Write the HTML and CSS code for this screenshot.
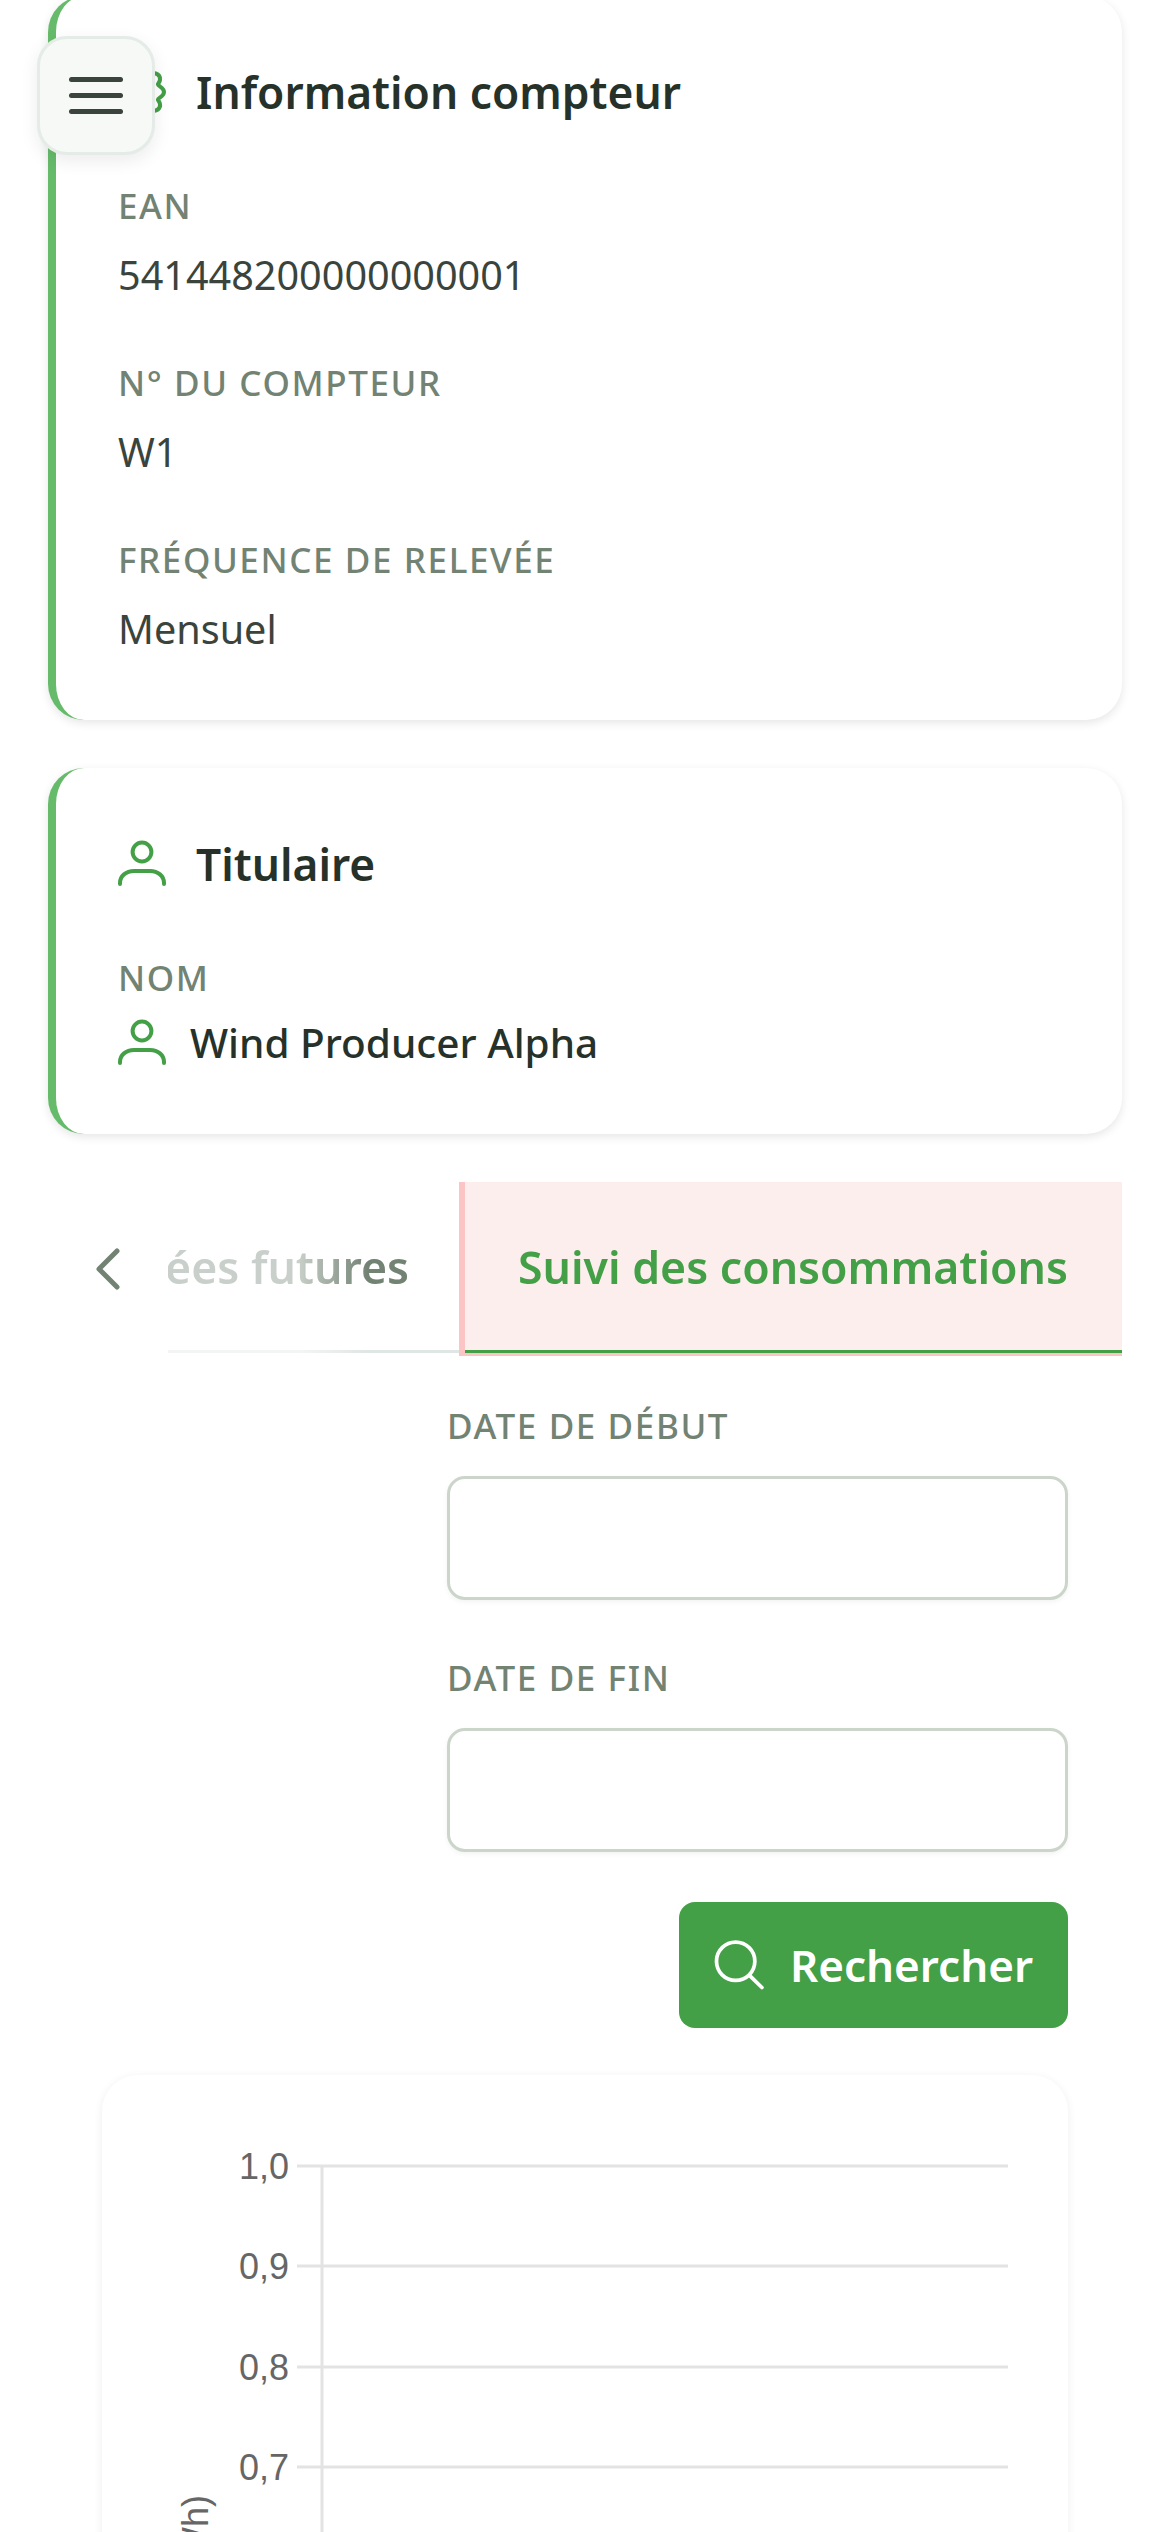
FILE: index.html
```html
<!DOCTYPE html>
<html lang="fr">
<head>
    <meta charset="UTF-8">
    <meta name="viewport" content="width=device-width, initial-scale=1.0">
    <title>Suivi des consommations</title>
    <link rel="stylesheet" href="styles.css">
</head>
<body>

    <button class="menu-button" aria-label="Menu">
        <span></span><span></span><span></span>
    </button>

    <main class="page">

        <section class="card">
            <h2 class="card-title">
                <svg class="icon" viewBox="0 0 24 24"><circle cx="12" cy="12" r="3.2"/><path d="M18 2.5C21 3 22 5.5 20 8C19.5 9 23 9.5 23 12C23 14.5 19.5 15 20 16C22 18.5 21 21 18 21.5"/></svg>
                Information compteur
            </h2>
            <div class="field">
                <div class="field-label">EAN</div>
                <div class="field-value">541448200000000001</div>
            </div>
            <div class="field">
                <div class="field-label">N° du compteur</div>
                <div class="field-value">W1</div>
            </div>
            <div class="field">
                <div class="field-label">Fréquence de relevée</div>
                <div class="field-value">Mensuel</div>
            </div>
        </section>

        <section class="card">
            <h2 class="card-title">
                <svg class="icon" viewBox="0 0 24 24"><circle cx="12" cy="6" r="4.7"/><path d="M1 22v-.5C1 18 4 15.5 8 15.5h8c4 0 7 2.5 7 6v.5"/></svg>
                Titulaire
            </h2>
            <div class="field">
                <div class="field-label">Nom</div>
                <div class="field-value holder">
                    <svg class="icon" viewBox="0 0 24 24"><circle cx="12" cy="6" r="4.7"/><path d="M1 22v-.5C1 18 4 15.5 8 15.5h8c4 0 7 2.5 7 6v.5"/></svg>
                    Wind Producer Alpha
                </div>
            </div>
        </section>

        <div class="tabs">
            <button class="tabs-back" aria-label="Précédent">
                <svg viewBox="0 0 26 42"><path d="M22 3L4 21l18 18"/></svg>
            </button>
            <div class="tabs-scroll">
                <div class="tab">Données futures</div>
                <div class="tab tab-active">Suivi des consommations</div>
            </div>
        </div>

        <form class="search-form">
            <label class="form-label">Date de début</label>
            <input class="form-input" type="text">
            <label class="form-label">Date de fin</label>
            <input class="form-input" type="text">
            <button class="search-button" type="button">
                <svg viewBox="0 0 24 24"><circle cx="10.4" cy="10.2" r="9.2"/><path d="M17.4 17.3L23 22.8"/></svg>
                Rechercher
            </button>
        </form>

        <section class="chart-card">
            <svg class="chart" viewBox="0 0 966 520" width="966" height="520">
                <g class="grid">
                    <path d="M195 91H906"/>
                    <path d="M195 191H906"/>
                    <path d="M195 292H906"/>
                    <path d="M195 392H906"/>
                    <path d="M220 91V520"/>
                </g>
                <g class="ticks">
                    <text x="187" y="104">1,0</text>
                    <text x="187" y="204">0,9</text>
                    <text x="187" y="305">0,8</text>
                    <text x="187" y="405">0,7</text>
                </g>
                <text class="axis-title" transform="translate(106 420) rotate(-90)">Consommation (kWh)</text>
            </svg>
        </section>

    </main>

</body>
</html>
```

FILE: styles.css
```css
html, body {
    margin: 0;
    height: 2532px;
    overflow: hidden;
    background-color: white;
}

body {
    font-family: "Noto Sans", "Open Sans", sans-serif;
    color: #263229;
    position: relative;
}

.page {
    display: flex;
    flex-direction: column;
    margin-top: -4px;
    padding: 0 48px;
}

/* floating menu */
.menu-button {
    position: absolute;
    left: 37px;
    top: 36px;
    z-index: 5;
    width: 118px;
    height: 119px;
    box-sizing: border-box;
    display: flex;
    flex-direction: column;
    align-items: center;
    justify-content: center;
    gap: 11px;
    padding: 0;
    background-color: #f7f9f7;
    border: 3px solid #e5ebe7;
    border-radius: 30px;
    box-shadow: 0 6px 18px rgba(0, 0, 0, 0.08);
}

.menu-button span {
    display: block;
    width: 54px;
    height: 5px;
    border-radius: 3px;
    background-color: #3a443c;
}

/* info cards */
.card {
    background-color: white;
    border-left: 8px solid #66bb6a;
    border-radius: 36px;
    box-shadow: 0 3px 10px rgba(0, 0, 0, 0.1);
    padding: 64px 54px 63px 62px;
    margin-bottom: 48px;
}

.card-title {
    display: flex;
    align-items: center;
    gap: 30px;
    margin: 0 0 57px;
    font-size: 44.3px;
    line-height: 64px;
    font-weight: 600;
}

.icon {
    width: 48px;
    height: 48px;
    flex: none;
    fill: none;
    stroke: #43a047;
    stroke-width: 2;
    stroke-linecap: round;
    stroke-linejoin: round;
}

.field {
    margin-bottom: 55px;
}

.field:last-child {
    margin-bottom: 0;
}

.field-label {
    font-size: 35px;
    line-height: 50px;
    font-weight: 500;
    letter-spacing: 1.6px;
    text-transform: uppercase;
    color: #728273;
    margin-bottom: 16px;
}

.field-value {
    font-size: 39.6px;
    line-height: 56px;
    color: #3a443c;
}

.holder {
    display: flex;
    align-items: center;
    gap: 24px;
    margin-top: -4px;
    font-size: 40.5px;
    font-weight: 500;
    color: #263229;
}

/* tabs */
.tabs {
    display: flex;
    align-items: stretch;
    height: 174px;
}

.tabs-back {
    flex: none;
    width: 120px;
    padding: 0 0 0 47px;
    background: none;
    border: none;
    display: flex;
    align-items: center;
}

.tabs-back svg {
    width: 26px;
    height: 42px;
    fill: none;
    stroke: #728273;
    stroke-width: 5;
    stroke-linecap: round;
    stroke-linejoin: round;
}

.tabs-scroll {
    flex: 1;
    min-width: 0;
    display: flex;
    justify-content: flex-end;
    overflow: hidden;
    background: linear-gradient(#e0e6e3, #e0e6e3) 0 168px / 100% 3px no-repeat;
    -webkit-mask-image: linear-gradient(to right, rgba(0, 0, 0, 0.38) 0, rgba(0, 0, 0, 0.38) 130px, black 200px);
    mask-image: linear-gradient(to right, rgba(0, 0, 0, 0.38) 0, rgba(0, 0, 0, 0.38) 130px, black 200px);
}

.tab {
    flex: none;
    box-sizing: border-box;
    height: 171px;
    padding: 0 50px 3px;
    display: flex;
    align-items: center;
    font-size: 44.6px;
    font-weight: 600;
    color: #728273;
    white-space: nowrap;
}

.tab-active {
    height: 174px;
    color: #43a047;
    background-color: #fdeeee;
    border-left: 6px solid #fcc5c5;
    border-bottom: 3px solid #fcc5c5;
    box-shadow: inset 0 -3px 0 #43a047;
    padding: 0 54px 3px 53px;
}

/* search form */
.search-form {
    display: flex;
    flex-direction: column;
    align-self: flex-end;
    width: 621px;
    margin-right: 54px;
    margin-top: 45px;
}

.form-label {
    font-size: 35px;
    line-height: 50px;
    font-weight: 500;
    letter-spacing: 1.6px;
    text-transform: uppercase;
    color: #728273;
    margin-bottom: 25px;
}

.form-input {
    box-sizing: border-box;
    height: 124px;
    margin-bottom: 53px;
    background-color: white;
    border: 3px solid #cbd5ca;
    border-radius: 18px;
    box-shadow: 0 2px 5px rgba(0, 0, 0, 0.05);
}

.search-button {
    align-self: flex-end;
    height: 126px;
    width: 389px;
    margin-top: -3px;
    display: flex;
    align-items: center;
    justify-content: center;
    gap: 26px;
    padding: 0;
    border: none;
    border-radius: 16px;
    background-color: #43a047;
    color: white;
    font-family: inherit;
    font-size: 44px;
    font-weight: 600;
}

.search-button svg {
    width: 50px;
    height: 50px;
    fill: none;
    stroke: white;
    stroke-width: 1.8;
    stroke-linecap: round;
}

/* chart */
.chart-card {
    align-self: flex-end;
    width: 966px;
    height: 520px;
    margin-right: 54px;
    margin-top: 47px;
    border-radius: 36px;
    background-color: white;
    box-shadow: 0 2px 10px rgba(0, 0, 0, 0.07);
}

.chart {
    display: block;
}

.grid path {
    fill: none;
    stroke: #e3e3e3;
    stroke-width: 3;
}

.ticks text, .axis-title {
    font-family: "Liberation Sans", Arial, sans-serif;
    font-size: 36px;
    fill: #666;
    text-anchor: end;
}
```
